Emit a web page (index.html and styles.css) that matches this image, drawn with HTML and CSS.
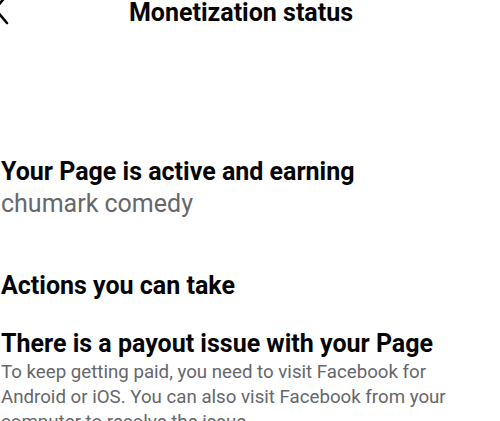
FILE: index.html
```html
<!DOCTYPE html>
<html lang="en">
<head>
  <meta charset="UTF-8">
  <meta name="viewport" content="width=device-width, initial-scale=1">
  <title>Monetization status</title>
  <link rel="stylesheet" href="styles.css">
</head>
<body>
  <div class="screen">
    <!-- Top bar -->
    <header class="top-bar">
      <svg class="back" width="20" height="40" viewBox="0 0 20 40" aria-hidden="true">
        <path d="M16 5 L4 19 L16 33" fill="none" stroke="#050505" stroke-width="2.6" stroke-linecap="round" stroke-linejoin="round"/>
      </svg>
      <h1>Monetization status</h1>
    </header>

    <!-- Page status -->
    <section class="status">
      <h2>Your Page is active and earning</h2>
      <p class="page-name">chumark comedy</p>
    </section>

    <!-- Actions -->
    <section class="actions">
      <h3>Actions you can take</h3>
      <div class="action-item">
        <h4>There is a payout issue with your Page</h4>
        <p>To keep getting paid, you need to visit Facebook for Android or iOS. You can also visit Facebook from your computer to resolve the issue.</p>
      </div>
    </section>
  </div>
</body>
</html>
```

FILE: styles.css
```css
/* Base */
body {
  margin: 0;
  font-family: Roboto, "Noto Sans", Arial, sans-serif;
  background: #fff;
  color: #050505;
  overflow: hidden;
}
.screen {
  width: 498px;
  padding: 0 1px;
}

/* Top bar */
.top-bar {
  position: relative;
  height: 26px;
  padding-right: 18px;
  text-align: center;
}
.top-bar .back {
  position: absolute;
  left: -10px;
  top: -10px;
}
.top-bar h1 {
  margin: 0;
  font-size: 25px;
  line-height: 26px;
  font-weight: 700;
}

/* Status block */
.status {
  margin-top: 131px;
}
.status h2 {
  margin: 0;
  font-size: 25px;
  line-height: 30px;
  font-weight: 700;
}
.page-name {
  margin: 2px 0 0;
  font-size: 25px;
  line-height: 30px;
  color: #65676b;
}

/* Actions */
.actions {
  margin-top: 52px;
}
.actions h3 {
  margin: 0;
  font-size: 25px;
  line-height: 30px;
  font-weight: 700;
}
.action-item {
  margin-top: 28px;
}
.action-item h4 {
  margin: 0;
  font-size: 25px;
  line-height: 30px;
  font-weight: 700;
}
.action-item p {
  margin: 1px 0 0;
  font-size: 18.7px;
  line-height: 25px;
  color: #65676b;
  width: 470px;
}
```
